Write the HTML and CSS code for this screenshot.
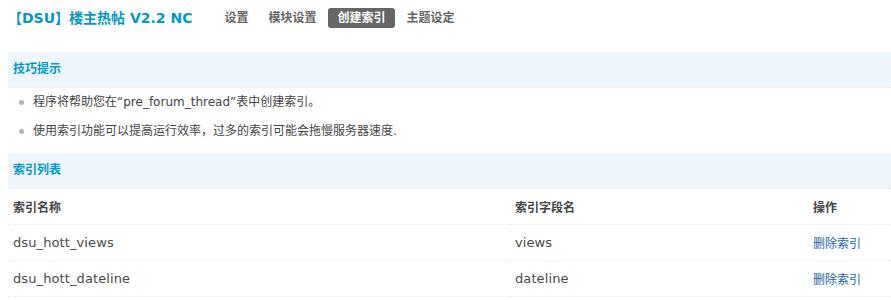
FILE: index.html
```html
<!DOCTYPE html>
<html lang="zh-CN">
<head>
<meta charset="utf-8">
<title>DSU 楼主热帖</title>
<link rel="stylesheet" href="styles.css">
</head>
<body>
<div class="topbar">
  <h3 class="title">【DSU】楼主热帖 V2.2 NC</h3>
  <ul class="tabs">
    <li><a href="#">设置</a></li>
    <li><a href="#">模块设置</a></li>
    <li class="current"><a href="#">创建索引</a></li>
    <li><a href="#">主题设定</a></li>
  </ul>
</div>

<div class="section-head">技巧提示</div>
<ul class="tips">
  <li>程序将帮助您在“pre_forum_thread”表中创建索引。</li>
  <li>使用索引功能可以提高运行效率，过多的索引可能会拖慢服务器速度.</li>
</ul>

<div class="section-head">索引列表</div>
<table class="list">
  <colgroup>
    <col class="c1"><col class="c2"><col class="c3">
  </colgroup>
  <thead>
    <tr><th>索引名称</th><th>索引字段名</th><th>操作</th></tr>
  </thead>
  <tbody>
    <tr><td class="code">dsu_hott_views</td><td class="code">views</td><td><a href="#">删除索引</a></td></tr>
    <tr><td class="code">dsu_hott_dateline</td><td class="code">dateline</td><td><a href="#">删除索引</a></td></tr>
  </tbody>
</table>
</body>
</html>
```

FILE: styles.css
```css
html, body {
  overflow: hidden;
}
body {
  margin: 0 0 0 8px;
  font-family: "DejaVu Sans", "Noto Sans CJK SC", sans-serif;
  font-size: 12px;
  color: #444;
  background: #fff;
}
a {
  text-decoration: none;
}

.topbar {
  display: flex;
  align-items: center;
  height: 20px;
  margin-top: 8px;
  margin-bottom: 24px;
}
.title {
  margin: 0 24px 0 0;
  font-size: 14px;
  font-weight: bold;
  color: #0099cc;
  line-height: 20px;
  white-space: nowrap;
}
.tabs {
  display: flex;
  list-style: none;
  margin: 0;
  padding: 0;
  gap: 4px;
}
.tabs li a {
  display: block;
  padding: 0 8px;
  height: 20px;
  line-height: 20px;
  font-weight: bold;
  color: #666;
  border-radius: 3px;
}
.tabs li.current a {
  background: #666;
  color: #fff;
  padding: 0 9px;
}

.section-head {
  height: 35px;
  line-height: 35px;
  padding-left: 5px;
  background: #eef5fb;
  border-bottom: 1px dotted #deeffb;
  color: #0099cc;
  font-weight: bold;
}

.tips {
  list-style: none;
  margin: 0;
  padding: 0 0 7px 0;
  color: #444;
}
.tips li {
  position: relative;
  height: 29px;
  line-height: 29px;
  padding-left: 25px;
}
.tips li::before {
  content: "";
  position: absolute;
  left: 11px;
  top: 12px;
  width: 5px;
  height: 5px;
  border-radius: 50%;
  background: #b4b4b4;
}

.list {
  width: 883px;
  border-collapse: collapse;
  table-layout: fixed;
}
.list .c1 { width: 502px; }
.list .c2 { width: 298px; }
.list .c3 { width: 83px; }
.list th,
.list td {
  height: 35px;
  padding: 0 0 0 5px;
  text-align: left;
  vertical-align: middle;
  border-bottom: 1px dotted #deeffb;
  white-space: nowrap;
}
.list th {
  font-weight: bold;
  color: #444;
}
.list td {
  color: #4a4a4a;
}
.list td.code {
  font-size: 13px;
  letter-spacing: 0.1px;
}
.list td a {
  color: #2366a8;
}
```
